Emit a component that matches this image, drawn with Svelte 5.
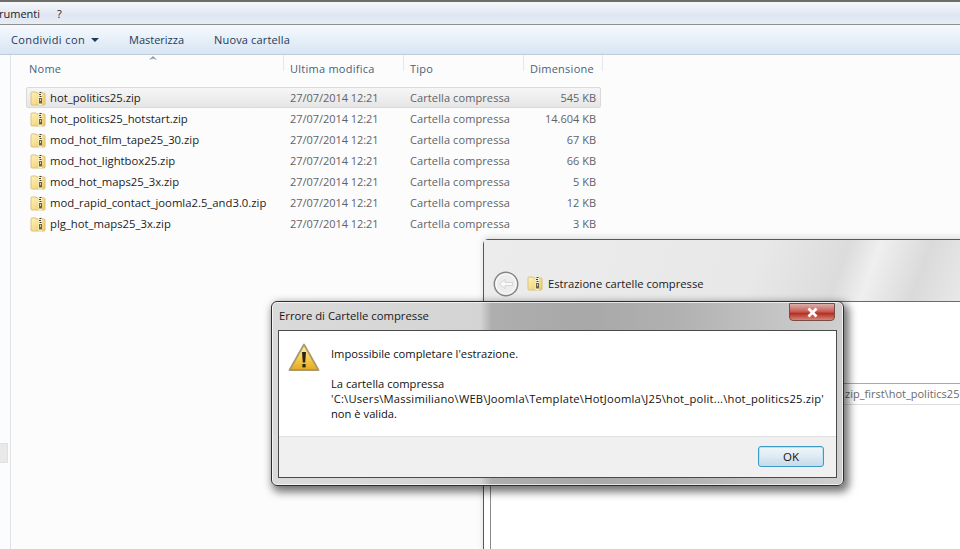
<script>
  const files = [
    ['hot_politics25.zip', '545 KB'],
    ['hot_politics25_hotstart.zip', '14.604 KB'],
    ['mod_hot_film_tape25_30.zip', '67 KB'],
    ['mod_hot_lightbox25.zip', '66 KB'],
    ['mod_hot_maps25_3x.zip', '5 KB'],
    ['mod_rapid_contact_joomla2.5_and3.0.zip', '12 KB'],
    ['plg_hot_maps25_3x.zip', '3 KB']
  ];
  const cols = ['Nome', 'Ultima modifica', 'Tipo', 'Dimensione'];
</script>

{#snippet zipIcon(id)}
  <svg class="zip" width="16" height="16" viewBox="0 0 16 16">
    <defs>
      <linearGradient id={id} x1="0" y1="0" x2="1" y2="1">
        <stop offset="0" stop-color="#fdf3bd"/>
        <stop offset="1" stop-color="#eec95f"/>
      </linearGradient>
    </defs>
    <path d="M1 3.5 L1.5 2 H6 L7 3 H14.5 L15 4 V14 L14.5 15 H1.5 L1 14 Z" fill="url(#{id})" stroke="#d8c17e" stroke-width="1"/>
    <rect x="8.5" y="1.5" width="3.5" height="13.5" fill="#f8f3dd"/>
    <path d="M9.5 2.5 H11.5 M9 4.5 H11 M9.5 6.5 H11.5" stroke="#3c3c34" stroke-width="1"/>
    <rect x="9" y="8" width="3" height="5.5" fill="#6a6548"/>
    <rect x="10" y="9" width="1" height="2" fill="#d8d2a8"/>
  </svg>
{/snippet}

<div class="page">
  <div class="menubar"><span class="m1">rumenti</span><span class="m2">?</span></div>
  <div class="toolbar">
    <span class="tool first">Condividi con <i class="caret"></i></span>
    <span class="tool burn">Masterizza</span>
    <span class="tool nuova">Nuova cartella</span>
  </div>
  <div class="explorer">
    <div class="nav"><div class="thumb"></div></div>
    <div class="main">
      <svg class="sort" width="8" height="4" viewBox="0 0 8 4"><path d="M0 4 L4 0 L8 4 L4 2.5 Z" fill="#8a9aa8"/></svg>
      <div class="head">
        {#each cols as c}<div class="hcell">{c}</div>{/each}
      </div>
      <div class="list">
        {#each files as f, i}
          <div class="row" class:sel={i === 0}>
            <div class="name">{@render zipIcon('zg' + i)}<span>{f[0]}</span></div>
            <div class="gray date">27/07/2014 12:21</div>
            <div class="gray type">Cartella compressa</div>
            <div class="gray size">{f[1]}</div>
          </div>
        {/each}
      </div>
    </div>
  </div>

  <div class="win back">
    <div class="glass">
      <svg class="backbtn" width="26" height="26" viewBox="0 0 26 26">
        <circle cx="13" cy="13" r="11.7" fill="#ededed" stroke="#858585" stroke-width="1.5"/>
        <circle cx="13" cy="13" r="10" fill="none" stroke="#fafafa" stroke-width="1.2"/>
        <path d="M6.5 13 L12 8.5 V11.5 H19.5 V14.5 H12 V17.5 Z" fill="#f9f9f9" stroke="#cfcfcf" stroke-width="0.8"/>
      </svg>
      {@render zipIcon('zgw')}
      <span class="wtitle">Estrazione cartelle compresse</span>
    </div>
    <div class="backbody">
      <div class="path">zip_first\hot_politics25</div>
    </div>
  </div>

  <div class="win dialog">
    <div class="dtitle">
      <span>Errore di Cartelle compresse</span>
      <div class="close">
        <svg width="13" height="11" viewBox="0 0 13 11"><path d="M2.5 1.5 L10.5 9.5 M10.5 1.5 L2.5 9.5" stroke="#fff" stroke-width="2.8"/></svg>
      </div>
    </div>
    <div class="dinner">
      <div class="msg">
        <svg class="warn" width="32" height="29" viewBox="0 0 32 29">
          <defs>
            <linearGradient id="wg" x1="0" y1="0" x2="0" y2="1">
              <stop offset="0" stop-color="#fff4b8"/>
              <stop offset="0.6" stop-color="#f4c94a"/>
              <stop offset="1" stop-color="#e6a71e"/>
            </linearGradient>
          </defs>
          <path d="M16 1.5 L30.5 27 H1.5 Z" fill="url(#wg)" stroke="#a89a70" stroke-width="1.8" stroke-linejoin="round"/>
          <path d="M14 9 H18 L17.2 19.5 H14.8 Z" fill="#2c2410"/>
          <rect x="14.4" y="21" width="3.2" height="3.4" fill="#2c2410"/>
        </svg>
        <div class="texts">
          <p class="lead">Impossibile completare l'estrazione.</p>
          <p>La cartella compressa<br><span class="long">'C:\Users\Massimiliano\WEB\Joomla\Template\HotJoomla\J25\hot_polit...\hot_politics25.zip'</span><br>non è valida.</p>
        </div>
      </div>
      <div class="foot"><button class="ok">OK</button></div>
    </div>
  </div>
</div>

<style>
  :global(body) { margin: 0; background: #fff; }
  .page {
    position: relative; width: 960px; height: 549px; overflow: hidden;
    display: flex; flex-direction: column;
    font-family: "Open Sans", "Noto Sans", sans-serif; font-size: 11px; color: #1e2a3a;
    background: #fcfcfc;
  }
  .menubar {
    box-sizing: border-box; height: 25px; flex: none;
    border-top: 2px solid #6e6e68; border-bottom: 1px solid #8c8f90;
    background: linear-gradient(#f6f8fb, #dfe6f2 60%, #e8edf5);
    display: flex; align-items: center; color: #222;
  }
  .m1 { margin-left: -1px; }
  .m2 { margin-left: 17px; }
  .toolbar {
    box-sizing: border-box; height: 30px; flex: none;
    background: linear-gradient(#f6fafe, #e8f0f9 45%, #d8e5f3);
    border-bottom: 1px solid #bfcbda;
    display: flex; align-items: center; color: #1e3a58;
  }
  .tool { white-space: nowrap; }
  .tool.first { margin-left: 11px; letter-spacing: .38px; width: 88px; }
  .tool.burn { margin-left: 30px; }
  .tool.nuova { margin-left: 30px; letter-spacing: .15px; }
  .caret { display: inline-block; border: 4px solid transparent; border-top-color: #1e3a58; border-bottom: 0; margin: 0 0 2px 3px; }
  .explorer { flex: 1; display: flex; min-height: 0; }
  .nav { position: relative; width: 10px; flex: none; border-right: 1px solid #e2e3e6; background: #fbfcfd; }
  .thumb { position: absolute; top: 388px; left: 0; width: 8px; height: 20px; background: #e9e9e9; border: 1px solid #e0e0e0; border-left: 0; box-sizing: border-box; }
  .main { position: relative; flex: 1; padding-left: 15px; }
  .sort { position: absolute; left: 138px; top: 1px; }
  .head { display: grid; grid-template-columns: 259px 120px 120px 79px; height: 17px; margin-left: -1px; }
  .hcell { box-sizing: border-box; height: 16px; padding-left: 6px; padding-top: 6px; color: #4c607a; line-height: 16px; border-right: 1px solid #e4e8ee; white-space: nowrap; letter-spacing: .25px; }
  .hcell:first-child { padding-left: 4px; }
  .list { margin-top: 15px; width: 575px; }
  .row {
    box-sizing: border-box; height: 21px; display: grid; grid-template-columns: 263px 120px 120px 66px;
    align-items: center; border: 1px solid transparent; border-radius: 2px; white-space: nowrap;
  }
  .row.sel { background: linear-gradient(#f6f6f6, #e6e6e6); border-color: #dadada; }
  .name { display: flex; align-items: center; gap: 4px; padding-left: 3px; color: #1c1c1c; font-size: 11.3px; }
  .gray { color: #5f6368; }
  .date { letter-spacing: -.05px; }
  .type { letter-spacing: .1px; }
  .size { text-align: right; }
  .zip { flex: none; }

  .win { position: absolute; box-sizing: border-box; }
  .back {
    left: 483px; top: 239px; width: 490px; height: 320px;
    border: 1px solid #55585a; border-radius: 5px 0 0 0;
    background: #fff; display: flex; flex-direction: column;
    box-shadow: 0 -2px 6px rgba(0,0,0,.12);
  }
  .glass {
    box-sizing: border-box; height: 62px; flex: none;
    background: linear-gradient(110deg, #ececec 0%, #e8e8e8 55%, #dcdcdc 72%, #efefef 78%, #dadada 88%, #ececec 100%);
    border-bottom: 1px solid #6b6b6b;
    display: flex; align-items: flex-end; padding: 0 0 4px 9px; gap: 6px;
    color: #1a1a1a;
  }
  .backbtn { margin-bottom: 0; }
  .wtitle { margin-bottom: 6px; margin-left: -1px; font-size: 11.2px; }
  .glass .zip { margin-bottom: 6px; margin-left: 2px; }
  .backbody { flex: 1; margin-left: 6px; border-left: 1px solid #8a8a8a; position: relative; }
  .path {
    position: absolute; left: 340px; top: 81px; width: 130px; height: 22px; box-sizing: border-box;
    border-top: 1px solid #aaa; border-bottom: 1px solid #ddd;
    padding-left: 14px; line-height: 20px; color: #6a6a6a; white-space: nowrap;
    font-size: 11px;
  }

  .dialog {
    left: 271px; top: 301px; width: 573px; height: 185px;
    border: 1px solid #2e2e2e; border-radius: 6px;
    padding: 0 6px 7px 6px;
    background: linear-gradient(90deg, #dadada 0%, #d4d4d4 36.5%, #aeaeae 38.5%, #a8a8a8 55%, #b0b0b0 70%, #c6c6c6 90%, #cfcfcf 100%);
    box-shadow: 3px 4px 9px 2px rgba(0,0,0,.55), inset 0 0 0 1px rgba(255,255,255,.7);
    display: flex; flex-direction: column;
  }
  .dtitle {
    position: relative; height: 28px; flex: none; display: flex; align-items: center;
    color: #1a1a1a; padding-left: 1px; padding-bottom: 2px; box-sizing: border-box; font-size: 11.3px;
  }
  .close {
    position: absolute; right: 2px; top: 1px; width: 46px; height: 18px; box-sizing: border-box;
    border: 1px solid #7a4a44; border-radius: 0 0 4px 4px;
    background: linear-gradient(#d9b0aa, #c8635a 45%, #b92e22 60%, #d4877c);
    display: flex; align-items: center; justify-content: center;
  }
  .dinner { flex: 1; min-height: 0; border: 1px solid #4a4a4a; background: #fff; display: flex; flex-direction: column; }
  .msg { height: 105px; flex: none; display: flex; padding: 12px 0 0 9px; box-sizing: border-box; color: #111; }
  .warn { flex: none; }
  .texts { margin-left: 11px; padding-top: 1px; font-size: 11.2px; }
  p { margin: 0; line-height: 15px; white-space: nowrap; }
  .lead { margin-bottom: 15px; padding-top: 2px; }
  .long { letter-spacing: .22px; }
  .foot {
    flex: 1; background: #f0f0f0; border-top: 1px solid #dfdfdf;
    display: flex; align-items: flex-start; justify-content: flex-end; padding: 9px 12px 0 0;
  }
  .ok {
    width: 66px; height: 21px; padding: 0; box-sizing: border-box;
    border: 1px solid #3c9ac9; border-radius: 3px;
    box-shadow: inset 0 0 0 1px #b9e2f3;
    background: linear-gradient(#eef6fb, #dfeaf2 50%, #c3dbe8);
    font: inherit; font-size: 11.5px; color: #111;
  }
</style>
